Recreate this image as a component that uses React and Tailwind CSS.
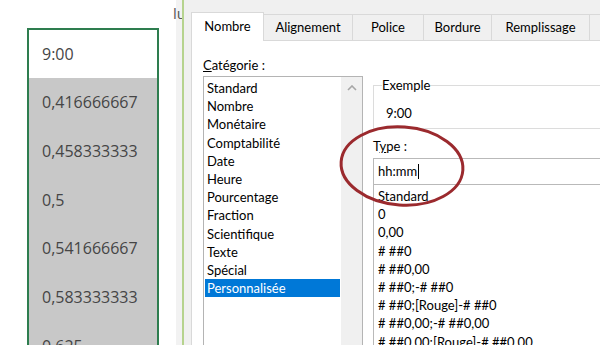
import React from 'react';

const cells = ['0,416666667', '0,458333333', '0,5', '0,541666667', '0,583333333', '0,625'];

const tabs = [
  { label: 'Nombre', w: 'w-[73px]', active: true },
  { label: 'Alignement', w: 'w-[89px]' },
  { label: 'Police', w: 'w-[71px]' },
  { label: 'Bordure', w: 'w-[68px]' },
  { label: 'Remplissage', w: 'w-[98px]' },
  { label: 'Protection', w: 'w-[80px]' },
];

const categories = [
  'Standard',
  'Nombre',
  'Monétaire',
  'Comptabilité',
  'Date',
  'Heure',
  'Pourcentage',
  'Fraction',
  'Scientifique',
  'Texte',
  'Spécial',
  'Personnalisée',
];

const formats = [
  'Standard',
  '0',
  '0,00',
  '# ##0',
  '# ##0,00',
  '# ##0;-# ##0',
  '# ##0;[Rouge]-# ##0',
  '# ##0,00;-# ##0,00',
  '# ##0,00;[Rouge]-# ##0,00',
];

const App = () => {
  return (
    <div className="relative flex h-[345px] w-[600px] overflow-hidden bg-white">
      {/* sheet side */}
      <div className="flex w-[182px] shrink-0 overflow-hidden">
        <div className="w-[176px] shrink-0 pl-[27px] pt-[28px]">
          <div className="w-[132px] border-x-2 border-t-2 border-[#2e7d4f] font-['Open_Sans',sans-serif] text-[16px] text-[#454545]">
            <div className="flex h-[48px] items-center bg-white pl-[13px]">9:00</div>
            {cells.map((c) => (
              <div key={c} className="flex h-[48.7px] items-center bg-[#c8c8c8] pl-[13px]">
                {c}
              </div>
            ))}
          </div>
        </div>
        <div className="w-[6px] shrink-0 bg-[#f2f2f2]">
          <span className="-ml-[3px] mt-[3px] block whitespace-nowrap font-['Open_Sans',sans-serif] text-[15px] leading-[20px] text-[#555]">
            lu
          </span>
        </div>
      </div>
      <div className="w-[2px] shrink-0 bg-[#b6d38e]" />

      {/* format cells dialog */}
      <div className="flex flex-1 flex-col bg-[#f0f0f0] pl-[7px] pt-[12px] font-['Lato',sans-serif] text-[13px] text-black">
        <div className="flex h-[28px] items-end">
          {tabs.map((t) =>
            t.active ? (
              <div
                key={t.label}
                className={`relative z-10 -mb-px flex h-[29px] shrink-0 items-center justify-center border-x border-t border-[#d9d9d9] bg-white ${t.w}`}
              >
                {t.label}
              </div>
            ) : (
              <div
                key={t.label}
                className={`flex h-[26px] shrink-0 items-center justify-center border-r border-t border-[#d9d9d9] bg-[#f0f0f0] ${t.w}`}
              >
                {t.label}
              </div>
            )
          )}
        </div>

        <div className="flex flex-1 items-start border-l border-t border-[#d9d9d9] bg-white pl-[11px] pt-[15px]">
          {/* category list */}
          <div className="flex w-[160px] shrink-0 flex-col">
            <div className="mb-[2px] leading-[18px]">
              <span className="underline">C</span>atégorie :
            </div>
            <div className="flex h-[300px] border border-[#b4b4b4]">
              <div className="flex-1 pt-[2px]">
                {categories.map((c) => (
                  <div
                    key={c}
                    className={`mx-px h-[18.2px] pl-[2px] leading-[18.2px] ${
                      c === 'Personnalisée' ? 'bg-[#0078d7] text-white' : ''
                    }`}
                  >
                    {c}
                  </div>
                ))}
              </div>
              <div className="flex w-[21px] shrink-0 justify-center bg-[#f0f0f0] pt-[8px]">
                <svg width="10" height="6" viewBox="0 0 10 6">
                  <path d="M1 5 L5 1 L9 5" fill="none" stroke="#a6a6a6" strokeWidth="1.6" />
                </svg>
              </div>
            </div>
          </div>

          {/* right side */}
          <div className="ml-[10px] w-[300px] shrink-0 pt-[22px]">
            <fieldset className="border border-[#dcdcdc] pl-[8px] pb-[6px]">
              <legend className="leading-[14px]">Exemple</legend>
              <div className="ml-[4px] mt-[12px] leading-[18px]">9:00</div>
            </fieldset>
            <div className="mt-[8px] leading-[18px]">
              T<span className="underline">y</span>pe :
            </div>
            <div className="mt-[3px] flex h-[27px] items-center border border-[#b9b9b9] pl-[4px]">
              <span>hh:mm</span>
              <span className="ml-px h-[15px] w-px bg-black" />
            </div>
            <div className="h-[200px] border-x border-b border-[#b9b9b9] pl-[4px] pt-[2px]">
              {formats.map((f) => (
                <div key={f} className="h-[18.2px] whitespace-nowrap leading-[18.2px]">
                  {f}
                </div>
              ))}
            </div>
          </div>
        </div>
      </div>

      {/* red circle annotation */}
      <svg
        className="pointer-events-none absolute left-[335px] top-[120px]"
        width="135"
        height="92"
        viewBox="0 0 135 92"
      >
        <ellipse
          cx="67"
          cy="46"
          rx="61"
          ry="39"
          fill="none"
          stroke="#9b2a2e"
          strokeWidth="3"
          transform="rotate(4 67 46)"
        />
      </svg>
    </div>
  );
};

export default App;
